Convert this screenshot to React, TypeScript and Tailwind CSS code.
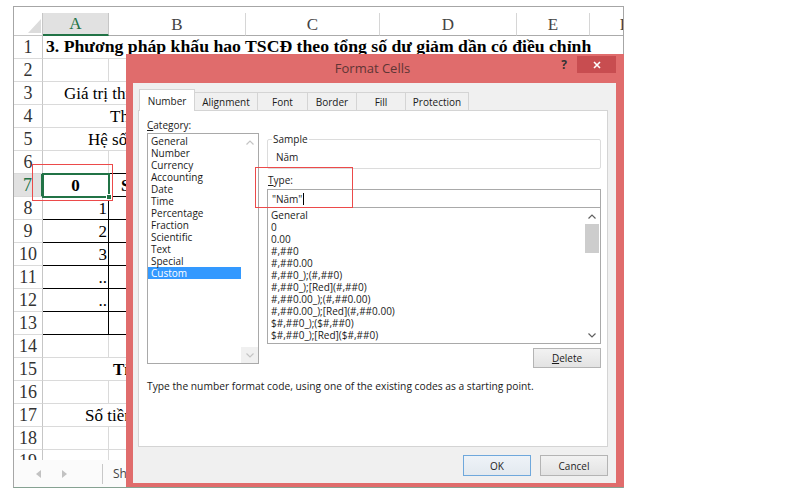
import React from 'react';

const COLW = [66, 137, 134, 137, 73, 70];
const LETTERS = ['A', 'B', 'C', 'D', 'E', 'F'];

type Seg = { cols: number; text?: string; cls?: string; black?: boolean; blackR?: boolean; big?: boolean };

const sum = (a: number, n: number) => COLW.slice(a, a + n).reduce((x, y) => x + y, 0);

const plain = (): Seg[] => COLW.map(() => ({ cols: 1 }));
const tableRow = (a: Seg, b: Seg): Seg[] => [a, b, { cols: 1 }, { cols: 1 }, { cols: 1 }, { cols: 1 }];

const ROWS: Seg[][] = [
  [{ cols: 6, text: '3. Phương pháp khấu hao TSCĐ theo tổng số dư giảm dần có điều chỉnh', cls: 'font-bold pl-[3px]', big: true }],
  plain(),
  [{ cols: 6, text: 'Giá trị thuần của TSCĐ', cls: 'pl-[21px]' }],
  [{ cols: 6, text: 'Thời gian sử dụng', cls: 'pl-[67px]' }],
  [{ cols: 6, text: 'Hệ số điều chỉnh', cls: 'pl-[45px]' }],
  tableRow({ cols: 1, black: true }, { cols: 1, black: true }),
  tableRow(
    { cols: 1, text: '0', cls: 'font-bold justify-center', black: true, blackR: true },
    { cols: 1, text: 'Số năm', cls: 'font-bold pl-[12px]', black: true }
  ),
  ...['1', '2', '3', '..', '..', ''].map((v) =>
    tableRow({ cols: 1, text: v, cls: 'justify-end pr-[1px]', black: true, blackR: true }, { cols: 1, black: true })
  ),
  plain(),
  [{ cols: 6, text: 'Tỉ lệ khấu hao', cls: 'font-bold pl-[70px]' }],
  plain(),
  [{ cols: 6, text: 'Số tiền khấu hao', cls: 'pl-[42px]' }],
  plain(),
  plain(),
];

function Chev({ up, color }: { up?: boolean; color: string }) {
  return (
    <svg width="8" height="5" viewBox="0 0 8 5">
      <path d={up ? 'M0.5 4.5 L4 1 L7.5 4.5' : 'M0.5 0.5 L4 4 L7.5 0.5'} fill="none" stroke={color} strokeWidth="1.2" />
    </svg>
  );
}

function Excel() {
  return (
    <div className="relative ml-[13px] mt-[6px] w-[611px] h-[482px] border border-[#a6a6a6] border-b-[#86a292] flex flex-col font-['Liberation_Serif',serif] text-black bg-white">
      <div className="h-[453px] overflow-hidden flex flex-col shrink-0">
        {/* header */}
        <div className="h-[29px] shrink-0 flex pt-[6px]">
          <div className="w-[29px] shrink-0 h-[23px] border-r border-b border-[#c6c6c6] flex items-end justify-end pr-[1px] pb-[2px]">
            <svg width="13" height="14" viewBox="0 0 13 14">
              <polygon points="13,0 13,14 0,14" fill="#dcdcdc" />
            </svg>
          </div>
          {COLW.map((w, i) => (
            <div
              key={i}
              style={{ width: w }}
              className={
                'h-[23px] shrink-0 flex items-center justify-center text-[17px] leading-none border-r ' +
                (i === 0
                  ? 'bg-[#e1e1e1] text-[#217346] border-r-[#c6c6c6] border-b-2 border-b-[#217346]'
                  : 'text-[#444] border-r-[#d6d6d6] border-b border-b-[#ababab]')
              }
            >
              {LETTERS[i]}
            </div>
          ))}
        </div>
        {ROWS.map((segs, r) => {
          const sel = r === 6;
          let col = 0;
          return (
            <div key={r} className="h-[23px] shrink-0 flex">
              <div
                className={
                  'w-[29px] shrink-0 h-[23px] flex items-center justify-center text-[18px] leading-none border-b border-b-[#dadada] ' +
                  (sel
                    ? 'bg-[#e1e1e1] text-[#217346] border-r-2 border-r-[#217346]'
                    : 'text-[#333] border-r border-r-[#c6c6c6]')
                }
              >
                {r + 1}
              </div>
              {segs.map((s, k) => {
                const w = sum(col, s.cols);
                col += s.cols;
                return (
                  <div
                    key={k}
                    style={{ width: w }}
                    className={
                      'shrink-0 h-[23px] flex items-center whitespace-nowrap leading-none border-b border-r ' +
                      (s.big ? 'text-[17.7px] ' : 'text-[17px] ') +
                      (s.black ? 'border-b-black ' : 'border-b-[#dadada] ') +
                      (s.blackR ? 'border-r-black ' : s.cols > 1 ? 'border-r-transparent ' : 'border-r-[#dadada] ') +
                      (s.cls ?? '')
                    }
                  >
                    {s.text}
                  </div>
                );
              })}
            </div>
          );
        })}
      </div>
      {/* sheet tab bar */}
      <div className="h-[27px] flex items-center bg-[#fbfbfb] font-['Open_Sans',sans-serif]">
        <div className="w-[22px]" />
        <svg width="5" height="8" viewBox="0 0 5 8">
          <polygon points="5,0 5,8 0,4" fill="#c2c2c2" />
        </svg>
        <div className="w-[21px]" />
        <svg width="5" height="8" viewBox="0 0 5 8">
          <polygon points="0,0 0,8 5,4" fill="#c2c2c2" />
        </svg>
        <div className="w-[35px]" />
        <div className="w-px h-[20px] bg-[#c8c8c8]" />
        <div className="ml-[10px] text-[12px] text-[#444]">Sheet1</div>
      </div>
      {/* selection */}
      <div className="absolute left-[28px] top-[166px] w-[68px] h-[25px] border-2 border-[#217346]">
        <div className="absolute right-[-4px] bottom-[-4px] w-[6px] h-[6px] bg-[#217346] border border-white" />
      </div>
    </div>
  );
}

const CATS = ['General', 'Number', 'Currency', 'Accounting', 'Date', 'Time', 'Percentage', 'Fraction', 'Scientific', 'Text', 'Special', 'Custom'];
const TYPES = [
  'General',
  '0',
  '0.00',
  '#,##0',
  '#,##0.00',
  '#,##0_);(#,##0)',
  '#,##0_);[Red](#,##0)',
  '#,##0.00_);(#,##0.00)',
  '#,##0.00_);[Red](#,##0.00)',
  '$#,##0_);($#,##0)',
  '$#,##0_);[Red]($#,##0)',
];
const TABS = [
  ['Number', 56],
  ['Alignment', 64],
  ['Font', 51],
  ['Border', 50],
  ['Fill', 50],
  ['Protection', 64],
] as const;

function Btn({ children, w, primary }: { children: React.ReactNode; w: number; primary?: boolean }) {
  return (
    <div
      style={{ width: w }}
      className={
        'h-[21px] flex items-center justify-center text-[10px] text-[#1e1e1e] border bg-gradient-to-b ' +
        (primary ? 'border-[#6fa8dc] from-[#eef3f8] to-[#e3e9ef]' : 'border-[#b4b4b4] from-[#f2f2f2] to-[#e3e3e3]')
      }
    >
      {children}
    </div>
  );
}

function Dialog() {
  return (
    <div className="absolute left-[126px] top-[54px] w-[498px] h-[433px] bg-[#e06c6c] flex flex-col font-['Open_Sans',sans-serif] text-[#1a1a1a]">
      <div className="h-[29px] shrink-0 flex items-start">
        <div className="w-[68px]" />
        <div className="flex-1 text-center text-[13px] leading-[29px] text-[#5e3535]">Format Cells</div>
        <div className="w-[26px] h-[19px] mt-[1px] flex items-center justify-center text-[12px] font-bold text-[#333]">?</div>
        <div className="w-[39px] h-[17px] mt-[2px] bg-[#c84d50] flex items-center justify-center">
          <svg width="8" height="8" viewBox="0 0 8 8">
            <path d="M1 1 L7 7 M7 1 L1 7" stroke="white" strokeWidth="1.6" />
          </svg>
        </div>
        <div className="w-[8px]" />
      </div>
      <div className="flex-1 ml-[7px] mr-[8px] mb-[4px] bg-[#f0f0f0] pt-[6px] pl-[5px] pr-[8px] flex flex-col text-[10px] leading-[12px]">
        {/* tabs */}
        <div className="h-[21px] flex items-end ml-px">
          {TABS.map(([t, w], i) => (
            <div
              key={t}
              style={{ width: w }}
              className={
                'flex items-center justify-center border border-b-0 border-[#d4d4d4] ' +
                (i === 0 ? 'h-[22px] -mb-px bg-white relative z-10' : 'h-[18px] bg-[#f0f0f0] -ml-px')
              }
            >
              {t}
            </div>
          ))}
        </div>
        {/* panel */}
        <div className="h-[337px] w-[470px] border border-[#d4d4d4] bg-white pt-[8px] pl-[8px] pr-[6px] flex flex-col">
          <div className="flex gap-[8px]">
            <div className="w-[112px] flex flex-col">
              <div className="h-[12px] mb-[2px]">
                <span className="underline">C</span>ategory:
              </div>
              <div className="h-[231px] border border-[#a9a9a9] flex">
                <div className="w-[93px] pt-px">
                  {CATS.map((c) => (
                    <div key={c} className={'h-[12px] pl-[3px] ' + (c === 'Custom' ? 'bg-[#3399ff] text-white' : '')}>
                      {c}
                    </div>
                  ))}
                </div>
                <div className="flex-1 flex flex-col justify-between items-center">
                  <div className="h-[17px] w-full flex items-center justify-center">
                    <Chev up color="#c4c4c4" />
                  </div>
                  <div className="h-[16px] w-full bg-[#f0f0f0] flex items-center justify-center">
                    <Chev color="#c4c4c4" />
                  </div>
                </div>
              </div>
            </div>
            <div className="flex-1 flex flex-col mt-[14px]">
              <fieldset className="border border-[#dcdcdc] rounded-[2px] px-[8px] pb-[5px]">
                <legend className="-ml-[4px] px-px leading-[12px]">Sample</legend>
                <div className="h-[12px] mt-[6px]">Năm</div>
              </fieldset>
              <div className="h-[12px] mt-[5px] pl-px">
                <span className="underline">T</span>ype:
              </div>
              <div className="h-[19px] mt-[3px] border border-[#a9a9a9] flex items-center pl-[4px]">
                <span>"Năm"</span>
                <span className="w-px h-[12px] bg-black ml-px" />
              </div>
              <div className="h-[136px] border border-t-0 border-[#a9a9a9] flex">
                <div className="flex-1 pt-px pl-[3px]">
                  {TYPES.map((t, i) => (
                    <div key={i} className="h-[12px] whitespace-nowrap">
                      {t}
                    </div>
                  ))}
                </div>
                <div className="w-[16px] flex flex-col">
                  <div className="h-[16px] flex items-center justify-center">
                    <Chev up color="#606060" />
                  </div>
                  <div className="h-[29px] mx-px bg-[#cdcdcd]" />
                  <div className="flex-1" />
                  <div className="h-[16px] flex items-center justify-center">
                    <Chev color="#606060" />
                  </div>
                </div>
              </div>
              <div className="self-end mt-[4px]">
                <div className="w-[68px] h-[20px] flex items-center justify-center border border-[#b4b4b4] bg-gradient-to-b from-[#f2f2f2] to-[#e3e3e3]">
                  <span className="underline">D</span>elete
                </div>
              </div>
            </div>
          </div>
          <div className="mt-[12px] h-[12px] whitespace-nowrap text-[10.25px]">
            Type the number format code, using one of the existing codes as a starting point.
          </div>
        </div>
        {/* buttons */}
        <div className="mt-[8px] flex justify-end gap-[9px]">
          <Btn w={68} primary>
            OK
          </Btn>
          <Btn w={68}>Cancel</Btn>
        </div>
      </div>
    </div>
  );
}

export default function App() {
  return (
    <div className="relative w-[800px] h-[500px] bg-white overflow-hidden">
      <Excel />
      <Dialog />
      <div className="absolute left-[32px] top-[164px] w-[81px] h-[37px] border-[1.5px] border-[#ec4a4a]" />
      <div className="absolute left-[255px] top-[167px] w-[98px] h-[41px] border-[1.5px] border-[#ec4a4a]" />
    </div>
  );
}
